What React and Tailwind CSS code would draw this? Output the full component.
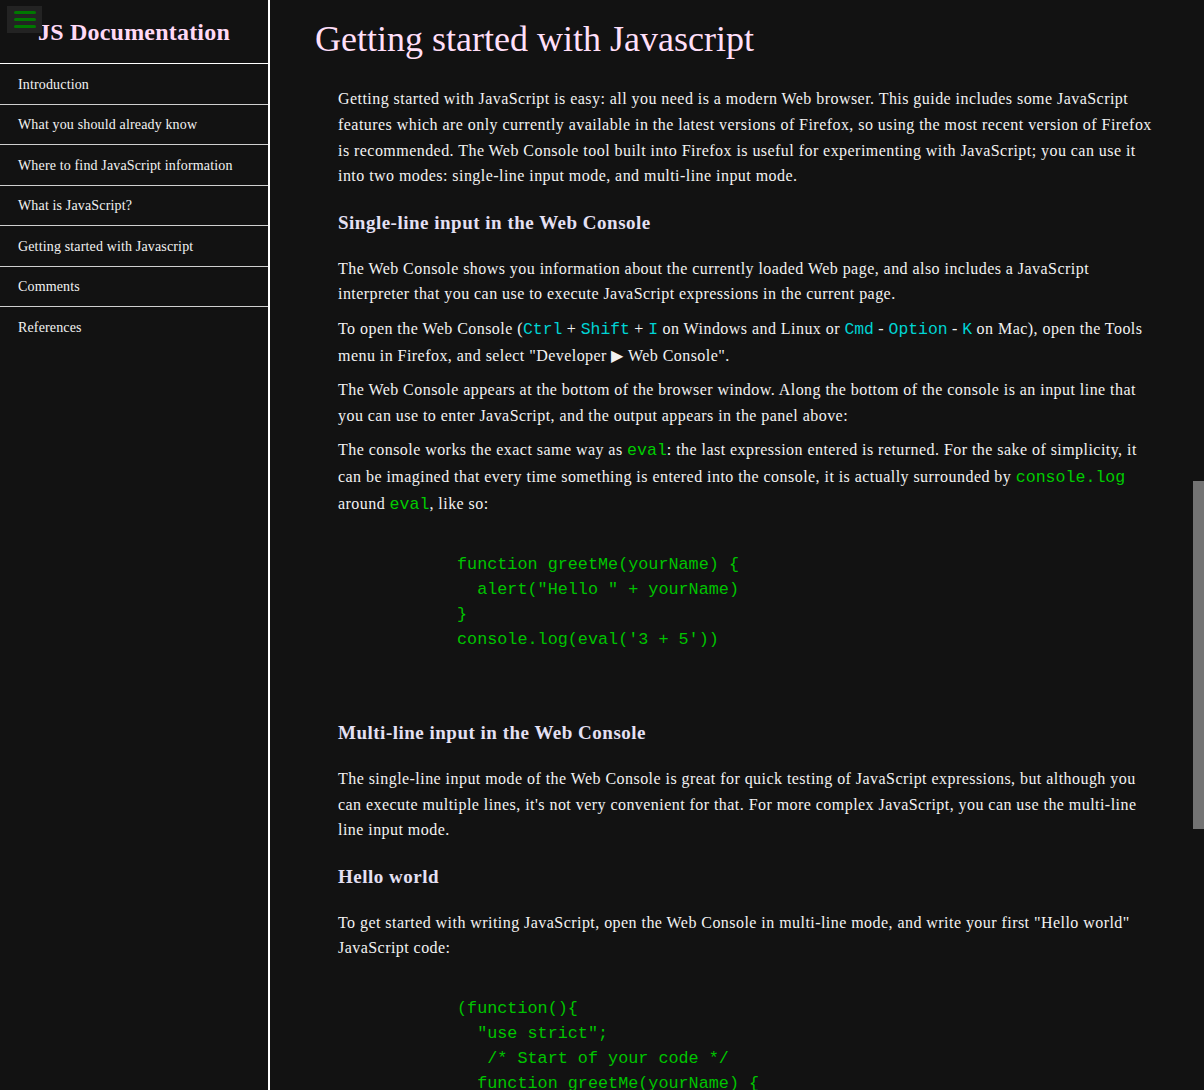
import { useLayoutEffect, useRef } from 'react';

const navItems = [
  'Introduction',
  'What you should already know',
  'Where to find JavaScript information',
  'What is JavaScript?',
  'Getting started with Javascript',
  'Comments',
  'References',
];

function Kbd({ children }) {
  return <code className="font-['Liberation_Mono',monospace] text-[16.4px] tracking-normal text-[#00d4d4]">{children}</code>;
}

function Code({ children }) {
  return <code className="font-['Liberation_Mono',monospace] text-[16.6px] tracking-normal text-[#00cc00]">{children}</code>;
}

function Block({ children }) {
  return (
    <pre className="ml-[119px] mt-[9px] pt-[26px] pb-[47px] font-['Liberation_Mono',monospace] text-[16.8px] leading-[25px] text-[#00c400] whitespace-pre">
      {children}
    </pre>
  );
}

function Section({ title, children, innerRef }) {
  return (
    <section ref={innerRef}>
      <header className="pt-[19px] pl-[45px] text-[36px] leading-[41px] text-[#ffdff8]">{title}</header>
      <div className="pl-[68px] pr-[30px] pt-[17px] pb-[10px]">{children}</div>
    </section>
  );
}

const P = ({ children }) => <p className="my-[9px] text-[16px] leading-[25.6px] tracking-[0.45px]">{children}</p>;
const H3 = ({ children }) => <h3 className="mt-[23px] mb-[22px] text-[19px] leading-[22px] tracking-[0.5px] font-bold text-[#e4e0f4]">{children}</h3>;
const Li = ({ children }) => <li className="my-1 text-[16px] leading-[25.6px] tracking-[0.45px]">{children}</li>;

export default function App() {
  const mainRef = useRef(null);
  const startRef = useRef(null);

  useLayoutEffect(() => {
    if (mainRef.current && startRef.current) {
      mainRef.current.scrollTop = startRef.current.offsetTop;
    }
  }, []);

  return (
    <div className="flex h-screen bg-[#121212] text-[#f2f2f2] font-['Liberation_Serif',serif]">
      <nav className="relative w-[270px] shrink-0 border-r-2 border-white">
        <div className="absolute left-[7px] top-[6px] flex h-[27px] w-[35px] flex-col items-center justify-center gap-[4px] bg-[#232323]">
          <span className="h-[3px] w-[22px] rounded-full bg-[#007800]" />
          <span className="h-[3px] w-[22px] rounded-full bg-[#007800]" />
          <span className="h-[3px] w-[22px] rounded-full bg-[#007800]" />
        </div>
        <header className="h-[64px] border-b border-white pt-[16px] text-center text-[24px] leading-[32px] tracking-[0.2px] font-bold text-[#ffd9f6]">
          JS Documentation
        </header>
        <ul>
          {navItems.map((item, i) => (
            <li
              key={item}
              className={`flex h-[40.5px] items-center pl-[18px] pt-[1px] text-[14px] tracking-[0.15px] ${i < navItems.length - 1 ? 'border-b border-[#cfcfcf]' : ''}`}
            >
              {item}
            </li>
          ))}
        </ul>
      </nav>

      <main
        ref={mainRef}
        className="relative flex-1 overflow-y-auto [scrollbar-width:none]"
      >
        <Section title="Introduction">
          <P>
            JavaScript is a cross-platform, object-oriented scripting language. It is a small and lightweight language. Inside a host environment (for example, a web browser), JavaScript can be connected to the objects of its environment to provide programmatic control over them.
          </P>
          <P>
            JavaScript contains a standard library of objects, such as Array, Date, and Math, and a core set of language elements such as operators, control structures, and statements. Core JavaScript can be extended for a variety of purposes by supplementing it with additional objects; for example:
          </P>
          <ul className="list-disc pl-10">
            <Li>Client-side JavaScript extends the core language by supplying objects to control a browser and its Document Object Model (DOM). For example, client-side extensions allow an application to place elements on an HTML form and respond to user events such as mouse clicks, form input, and page navigation.</Li>
            <Li>Server-side JavaScript extends the core language by supplying objects relevant to running JavaScript on a server. For example, server-side extensions allow an application to communicate with a database, provide continuity of information from one invocation to another of the application, or perform file manipulations on a server.</Li>
          </ul>
        </Section>

        <Section title="What you should already know">
          <P>This guide assumes you have the following basic background:</P>
          <ul className="list-disc pl-10">
            <Li>A general understanding of the Internet and the World Wide Web (WWW).</Li>
            <Li>Good working knowledge of HyperText Markup Language (HTML).</Li>
            <Li>Some programming experience. If you are new to programming, try one of the tutorials linked on the main page about JavaScript.</Li>
          </ul>
        </Section>

        <Section title="Where to find JavaScript information">
          <P>The JavaScript documentation on MDN includes the following:</P>
          <ul className="list-disc pl-10">
            <Li>Learning the Web provides information for beginners and introduces basic concepts of programming and the Internet.</Li>
            <Li>JavaScript Guide (this guide) provides an overview about the JavaScript language and its objects.</Li>
            <Li>JavaScript Reference provides detailed reference material for JavaScript.</Li>
          </ul>
          <P>
            If you are new to JavaScript, start with the articles in the learning area and the JavaScript Guide. Once you have a firm grasp of the fundamentals, you can use the JavaScript Reference to get more details on individual objects and statements.
          </P>
        </Section>

        <Section title="What is JavaScript?">
          <P>
            JavaScript is a cross-platform, object-oriented scripting language used to make webpages interactive (e.g., having complex animations, clickable buttons, popup menus, etc.). There are also more advanced server side versions of JavaScript such as Node.Js which allow you to add more functionality to a website than simply downloading files (such as realtime collaboration between multiple computers). Inside a host environment (for example, a web browser), JavaScript can be connected to the objects of its environment to provide programmatic control over them.
          </P>
          <P>
            JavaScript contains a standard library of objects, such as Array, Date, and Math, and a core set of language elements such as operators, control structures, and statements. Core JavaScript can be extended for a variety of purposes by supplementing it with additional objects; for example:
          </P>
          <ul className="list-disc pl-10">
            <Li>Client-side JavaScript extends the core language by supplying objects to control a browser and its Document Object Model (DOM).</Li>
            <Li>Server-side JavaScript extends the core language by supplying objects relevant to running JavaScript on a server.</Li>
          </ul>
        </Section>

        <Section title="Getting started with Javascript" innerRef={startRef}>
          <P>
            Getting started with JavaScript is easy: all you need is a modern Web browser. This guide includes some JavaScript features which are only currently available in the latest versions of Firefox, so using the most recent version of Firefox is recommended. The Web Console tool built into Firefox is useful for experimenting with JavaScript; you can use it into two modes: single-line input mode, and multi-line input mode.
          </P>
          <H3>Single-line input in the Web Console</H3>
          <P>
            The Web Console shows you information about the currently loaded Web page, and also includes a JavaScript interpreter that you can use to execute JavaScript expressions in the current page.
          </P>
          <P>
            To open the Web Console (<Kbd>Ctrl</Kbd> + <Kbd>Shift</Kbd> + <Kbd>I</Kbd> on Windows and Linux or <Kbd>Cmd</Kbd> - <Kbd>Option</Kbd> - <Kbd>K</Kbd> on Mac), open the Tools menu in Firefox, and select "Developer ▶ Web Console".
          </P>
          <P>
            The Web Console appears at the bottom of the browser window. Along the bottom of the console is an input line that you can use to enter JavaScript, and the output appears in the panel above:
          </P>
          <P>
            The console works the exact same way as <Code>eval</Code>: the last expression entered is returned. For the sake of simplicity, it can be imagined that every time something is entered into the console, it is actually surrounded by <Code>console.log</Code> around <Code>eval</Code>, like so:
          </P>
          <Block>{`function greetMe(yourName) {
  alert("Hello " + yourName)
}
console.log(eval('3 + 5'))`}</Block>
          <H3>Multi-line input in the Web Console</H3>
          <P>
            The single-line input mode of the Web Console is great for quick testing of JavaScript expressions, but although you can execute multiple lines, it's not very convenient for that. For more complex JavaScript, you can use the multi-line line input mode.
          </P>
          <H3>Hello world</H3>
          <P>
            To get started with writing JavaScript, open the Web Console in multi-line mode, and write your first "Hello world" JavaScript code:
          </P>
          <Block>{`(function(){
  "use strict";
   /* Start of your code */
  function greetMe(yourName) {
    alert("Hello " + yourName);
  }

  greetMe("World");
  /* End of your code */
})();`}</Block>
        </Section>

        <Section title="Comments">
          <P>The syntax of comments is the same as in C++ and in many other languages:</P>
          <Block>{`// a one line comment

/* this is a longer,
 * multi-line comment
 */

/* You can't, however, /* nest comments */ SyntaxError */`}</Block>
          <P>Comments behave like whitespace, and are discarded during script execution.</P>
        </Section>

        <Section title="References">
          <ul className="list-disc pl-10">
            <Li>All the documentation in this page is taken from MDN</Li>
          </ul>
        </Section>
      </main>

      {/* scrollbar track */}
      <div className="w-[11px] shrink-0 bg-[#121212]">
        <div className="mt-[481px] h-[348px] w-full bg-[#737373]" />
      </div>
    </div>
  );
}
